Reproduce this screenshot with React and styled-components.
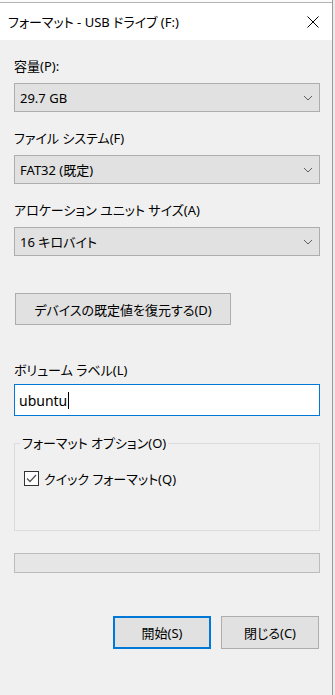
import React from "react";
import styled, { createGlobalStyle } from "styled-components";

const GlobalStyle = createGlobalStyle`
  body {
    margin: 0;
    background: #ececec;
    font-family: "Noto Sans", "Noto Sans CJK JP", sans-serif;
    font-size: 13px;
    font-feature-settings: "palt";
    color: #000;
  }
`;

const Page = styled.div`
  display: flex;
  width: 335px;
  height: 695px;
  overflow: hidden;
`;

const Window = styled.div`
  width: 332px;
  flex-shrink: 0;
  display: flex;
  flex-direction: column;
  border-right: 1px solid #9a9a9a;
  background: #f0f0f0;
`;

const TopStrip = styled.div`
  height: 2px;
  background: #fbfbfb;
  border-bottom: 1px solid #b4b4b4;
`;

const TitleBar = styled.div`
  height: 37px;
  background: #fff;
  display: flex;
  align-items: center;
  justify-content: space-between;
  padding: 0 13px 0 8px;
`;

const Title = styled.span`
  font-size: 13px;
  line-height: 16px;
`;

const Body = styled.div`
  display: flex;
  flex-direction: column;
  padding: 0 12px 0 14px;
`;

const Label = styled.div`
  line-height: 16px;
  height: 16px;
  margin-top: ${(p) => p.$top}px;
  margin-bottom: ${(p) => p.$bottom}px;
`;

const Select = styled.div`
  height: 29px;
  box-sizing: border-box;
  background: #e1e1e1;
  border: 1px solid #adadad;
  display: flex;
  align-items: center;
  justify-content: space-between;
  padding: 0 6px 0 5px;
`;

const Button = styled.div`
  box-sizing: border-box;
  height: ${(p) => p.$h || 32}px;
  width: ${(p) => p.$w}px;
  background: #e1e1e1;
  border: ${(p) => (p.$default ? "2px solid #0078d7" : "1px solid #adadad")};
  display: flex;
  align-items: center;
  justify-content: center;
`;

const ResetButton = styled(Button)`
  margin: 37px 0 0 1px;
`;

const TextBox = styled.div`
  height: 32px;
  box-sizing: border-box;
  background: #fff;
  border: 1px solid #0078d7;
  display: flex;
  align-items: center;
  padding-left: 4px;
  font-size: 14px;
`;

const Caret = styled.span`
  display: inline-block;
  width: 1px;
  height: 17px;
  background: #000;
  margin-left: 1px;
`;

const Group = styled.fieldset`
  margin: 19px 0 0;
  height: 96px;
  box-sizing: border-box;
  border: 1px solid #dcdcdc;
  padding: 0 0 0 9px;
`;

const Legend = styled.legend`
  margin-left: -4px;
  padding: 0 2px;
  line-height: 16px;
`;

const CheckRow = styled.div`
  display: flex;
  align-items: center;
  gap: 5px;
  margin-top: 18px;
`;

const CheckBox = styled.div`
  width: 15px;
  height: 15px;
  box-sizing: border-box;
  border: 1px solid #333;
  background: #fff;
  display: flex;
  align-items: center;
  justify-content: center;
`;

const Progress = styled.div`
  margin-top: 22px;
  height: 20px;
  box-sizing: border-box;
  background: #e6e6e6;
  border: 1px solid #bcbcbc;
`;

const ButtonRow = styled.div`
  display: flex;
  justify-content: flex-end;
  gap: 10px;
  margin: 43px 1px 0 0;
`;

const Chevron = () => (
  <svg width="10" height="6" viewBox="0 0 10 6">
    <path d="M1 1 L5 5 L9 1" fill="none" stroke="#606060" strokeWidth="1" />
  </svg>
);

const Close = () => (
  <svg width="12" height="12" viewBox="0 0 12 12">
    <path d="M0.5 0.5 L11.5 11.5 M11.5 0.5 L0.5 11.5" stroke="#000" strokeWidth="1" />
  </svg>
);

const Check = () => (
  <svg width="11" height="9" viewBox="0 0 11 9">
    <path d="M1 4.5 L4 7.5 L10 1" fill="none" stroke="#555" strokeWidth="1.3" />
  </svg>
);

const fields = [
  { label: "容量(P):", value: "29.7 GB", top: 18 },
  { label: "ファイル システム(F)", value: "FAT32 (既定)", top: 18 },
  { label: "アロケーション ユニット サイズ(A)", value: "16 キロバイト", top: 18 },
];

export default function App() {
  return (
    <Page>
      <GlobalStyle />
      <Window>
        <TopStrip />
        <TitleBar>
          <Title>フォーマット - USB ドライブ (F:)</Title>
          <Close />
        </TitleBar>
        <Body>
          {fields.map((f) => (
            <React.Fragment key={f.label}>
              <Label $top={f.top} $bottom={9}>
                {f.label}
              </Label>
              <Select>
                <span>{f.value}</span>
                <Chevron />
              </Select>
            </React.Fragment>
          ))}
          <ResetButton $w={216}>デバイスの既定値を復元する(D)</ResetButton>
          <Label $top={37} $bottom={6}>
            ボリューム ラベル(L)
          </Label>
          <TextBox>
            ubuntu
            <Caret />
          </TextBox>
          <Group>
            <Legend>フォーマット オプション(O)</Legend>
            <CheckRow>
              <CheckBox>
                <Check />
              </CheckBox>
              <span>クイック フォーマット(Q)</span>
            </CheckRow>
          </Group>
          <Progress />
          <ButtonRow>
            <Button $w={98} $h={33} $default>
              開始(S)
            </Button>
            <Button $w={98} $h={33}>
              閉じる(C)
            </Button>
          </ButtonRow>
        </Body>
      </Window>
    </Page>
  );
}
